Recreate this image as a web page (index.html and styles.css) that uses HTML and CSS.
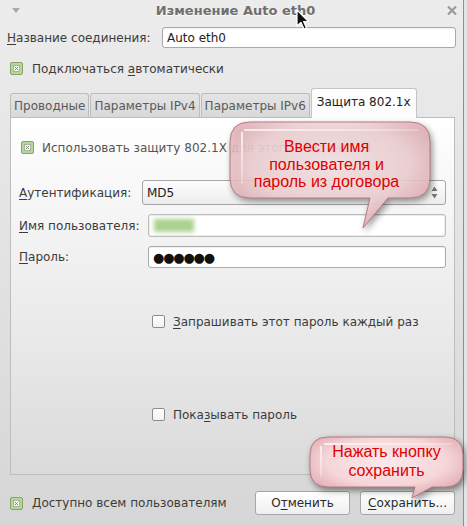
FILE: index.html
```html
<!DOCTYPE html>
<html lang="ru">
<head>
<meta charset="utf-8">
<title>Изменение Auto eth0</title>
<link rel="stylesheet" href="styles.css">
</head>
<body>
<div class="win">
  <div class="titlebar">
    <svg class="tb-menu" width="8" height="5" viewBox="0 0 8 5"><path d="M0 0 H8 L4 5 Z" fill="#a9a9a9"/></svg>
    <span class="tb-title">Изменение Auto eth0</span>
    <svg class="tb-close" width="10" height="9" viewBox="0 0 10 9"><path d="M1 0.5 L9 8.5 M9 0.5 L1 8.5" stroke="#9c9c9c" stroke-width="2.2"/></svg>
  </div>
  <div class="content">
    <div class="name-row">
      <span class="lbl"><u>Н</u>азвание соединения:</span>
      <div class="entry name-entry">Auto eth0</div>
    </div>
    <div class="check-row auto-row">
      <svg class="cb" width="13" height="13" viewBox="0 0 13 13"><rect x="0.5" y="0.5" width="12" height="12" rx="1.5" fill="#b3d795" stroke="#86a470"/><rect x="3.5" y="3.5" width="6" height="6" fill="#fff" stroke="#9aa892" stroke-width="0.8"/><path d="M4.8 4.8 L8.2 8.2 M8.2 4.8 L4.8 8.2" stroke="#7d7d7d" stroke-width="1"/></svg>
      <span>Подключаться <u>а</u>втоматически</span>
    </div>
    <div class="notebook">
      <div class="tabs">
        <div class="tab">Проводные</div>
        <div class="tab">Параметры IPv4</div>
        <div class="tab">Параметры IPv6</div>
        <div class="tab active">Защита 802.1x</div>
      </div>
      <div class="panel">
        <div class="check-row use-row">
          <svg class="cb" width="13" height="13" viewBox="0 0 13 13"><rect x="0.5" y="0.5" width="12" height="12" rx="1.5" fill="#b3d795" stroke="#86a470"/><rect x="3.5" y="3.5" width="6" height="6" fill="#fff" stroke="#9aa892" stroke-width="0.8"/><path d="M4.8 4.8 L8.2 8.2 M8.2 4.8 L4.8 8.2" stroke="#7d7d7d" stroke-width="1"/></svg>
          <span class="use-text">Использовать защиту 802.1X для этого соединения</span>
        </div>
        <div class="form">
          <span class="lbl"><u>А</u>утентификация:</span>
          <div class="combo"><span>MD5</span>
            <svg class="arrows" width="7" height="13" viewBox="0 0 7 13"><path d="M3.5 0.5 L6.5 5 H0.5 Z M3.5 12.5 L6.5 8 H0.5 Z" fill="#777"/></svg>
          </div>
          <span class="lbl"><u>И</u>мя пользователя:</span>
          <div class="entry user-entry"><span class="blob"></span></div>
          <span class="lbl"><u>П</u>ароль:</span>
          <div class="entry pass-entry"><span class="dots">●●●●●●</span></div>
        </div>
        <div class="check-row ask-row">
          <span class="cb-off"></span>
          <span><u>З</u>апрашивать этот пароль каждый раз</span>
        </div>
        <div class="check-row show-row">
          <span class="cb-off"></span>
          <span>Пока<u>з</u>ывать пароль</span>
        </div>
      </div>
    </div>
    <div class="bottom">
      <div class="check-row all-row">
        <svg class="cb" width="13" height="13" viewBox="0 0 13 13"><rect x="0.5" y="0.5" width="12" height="12" rx="1.5" fill="#b3d795" stroke="#86a470"/><rect x="3.5" y="3.5" width="6" height="6" fill="#fff" stroke="#9aa892" stroke-width="0.8"/><path d="M4.8 4.8 L8.2 8.2 M8.2 4.8 L4.8 8.2" stroke="#7d7d7d" stroke-width="1"/></svg>
        <span>Доступно всем пользователям</span>
      </div>
      <div class="buttons">
        <div class="btn">О<u>т</u>менить</div>
        <div class="btn"><u>С</u>охранить...</div>
      </div>
    </div>
  </div>
</div>

<div class="bubble b1">
  <svg class="bubble-shape" width="220" height="124" viewBox="0 0 220 124">
    <defs>
      <radialGradient id="g1" cx="50%" cy="40%" r="65%">
        <stop offset="0" stop-color="#fbe9eb"/>
        <stop offset="0.6" stop-color="#f5d6d9"/>
        <stop offset="1" stop-color="#dfa5ad"/>
      </radialGradient>
      <linearGradient id="h1" x1="0" y1="0" x2="1" y2="1">
        <stop offset="0" stop-color="#fff" stop-opacity="0.95"/>
        <stop offset="0.5" stop-color="#fff" stop-opacity="0.3"/>
        <stop offset="1" stop-color="#fff" stop-opacity="0"/>
      </linearGradient>
    </defs>
    <path d="M28 8 H188 Q208 8 208 28 V64 Q208 84 188 84 H166 L141 114 L148 84 H28 Q8 84 8 64 V28 Q8 8 28 8 Z" fill="url(#g1)" fill-opacity="0.88" stroke="#b07c83" stroke-width="1"/>
    <path d="M22 16 H196 M20 18 V70" stroke="url(#h1)" stroke-width="1.6" fill="none"/>
  </svg>
  <div class="bubble-text t1">Ввести имя<br>пользователя и<br>пароль из договора</div>
</div>

<div class="bubble b2">
  <svg class="bubble-shape" width="165" height="74" viewBox="0 0 165 74">
    <defs>
      <radialGradient id="g2" cx="50%" cy="40%" r="65%">
        <stop offset="0" stop-color="#fbe9eb"/>
        <stop offset="0.6" stop-color="#f5d6d9"/>
        <stop offset="1" stop-color="#dfa5ad"/>
      </radialGradient>
      <linearGradient id="h2" x1="0" y1="0" x2="1" y2="1">
        <stop offset="0" stop-color="#fff" stop-opacity="0.95"/>
        <stop offset="0.5" stop-color="#fff" stop-opacity="0.3"/>
        <stop offset="1" stop-color="#fff" stop-opacity="0"/>
      </linearGradient>
    </defs>
    <path d="M26 8 H143 Q161 8 161 26 V40 Q161 58 143 58 H130 L110 69 L113 58 H26 Q8 58 8 40 V26 Q8 8 26 8 Z" fill="url(#g2)" stroke="#b07c83" stroke-width="1"/>
    <path d="M22 15 H150 M19 17 V48" stroke="url(#h2)" stroke-width="1.6" fill="none"/>
  </svg>
  <div class="bubble-text t2">Нажать кнопку<br>сохранить</div>
</div>

<svg class="cursor" width="14" height="21" viewBox="0 0 14 21"><path d="M1 1 V17 L5 13.5 L8 20 L10.5 19 L7.6 12.5 H12.5 Z" fill="#111" stroke="#fff" stroke-width="1.2" stroke-linejoin="round"/></svg>
</body>
</html>
```

FILE: styles.css
```css
html, body {
  margin: 0;
  padding: 0;
}
body {
  width: 467px;
  height: 526px;
  overflow: hidden;
  position: relative;
  background: #e4e4e4;
  font-family: "DejaVu Sans", "Noto Sans", sans-serif;
  font-size: 12px;
  color: #3c3c3c;
}
u {
  text-decoration: underline;
  text-underline-offset: 2px;
}
.win {
  width: 463px;
  height: 526px;
  border-right: 1px solid #8f8f8f;
  background: linear-gradient(#ececec, #e2e2e2 50%, #d6d6d6);
  display: flex;
  flex-direction: column;
}
.titlebar {
  height: 22px;
  display: flex;
  align-items: center;
  justify-content: space-between;
  padding: 0 6px 0 12px;
  flex: none;
}
.tb-menu {
  margin-top: -2px;
}
.tb-title {
  font-weight: bold;
  font-size: 13px;
  color: #6f6f6f;
  text-shadow: 0 1px 0 #fafafa;
  margin-left: 4px;
  margin-top: -1px;
}
.tb-close {
  margin-top: -2px;
}
.content {
  padding: 0 7px;
  display: flex;
  flex-direction: column;
}
.name-row {
  margin-top: 5px;
  display: flex;
  align-items: center;
  height: 21px;
}
.name-row .lbl {
  width: 155px;
  flex: none;
}
.entry {
  background: #fff;
  border: 1px solid #a9a9a9;
  border-radius: 3px;
  box-sizing: border-box;
  box-shadow: inset 0 1px 1px rgba(0,0,0,0.06);
  display: flex;
  align-items: center;
}
.name-entry {
  flex: 1;
  height: 21px;
  padding-left: 4px;
  color: #222;
}
.check-row {
  display: flex;
  align-items: center;
  height: 13px;
}
.cb {
  flex: none;
  margin-right: 9px;
}
.cb-off {
  flex: none;
  width: 13px;
  height: 13px;
  box-sizing: border-box;
  border: 1px solid #8c8c8c;
  border-radius: 2px;
  background: linear-gradient(#ffffff, #f2f2f2);
  margin-right: 8px;
}
.auto-row {
  margin-top: 14px;
  padding-left: 3px;
}
.notebook {
  margin: 13px 1px 0 3px;
  display: flex;
  flex-direction: column;
}
.tabs {
  display: flex;
  align-items: flex-end;
  height: 30px;
  position: relative;
  z-index: 1;
  margin-bottom: -1px;
}
.tab {
  height: 24px;
  box-sizing: border-box;
  padding: 0 3px;
  border: 1px solid #bcbcbc;
  border-bottom: none;
  border-radius: 3px 3px 0 0;
  background: linear-gradient(#e4e4e4, #d8d8d8);
  color: #5a5a5a;
  display: flex;
  align-items: center;
  margin-right: 1px;
  margin-bottom: 1px;
}
.tab.active {
  height: 30px;
  background: #fdfdfd;
  color: #222;
  border-color: #c4c4c4;
  padding: 0 5px 4px 5px;
  margin-bottom: 0;
}
.panel {
  height: 358px;
  box-sizing: border-box;
  border: 1px solid #bdbdbd;
  background: linear-gradient(#ffffff, #f4f4f4 30%, #e6e6e6 70%, #dadada);
  padding: 0 8px 0 7px;
  display: flex;
  flex-direction: column;
}
.use-row {
  margin-top: 23px;
  padding-left: 3px;
}
.use-row .cb {
  margin-right: 8px;
}
.use-text {
  color: #555;
}
.form {
  margin-top: 26px;
  display: grid;
  grid-template-columns: 124px 1fr;
  grid-template-rows: 25px 23px 22px;
  row-gap: 9px;
  align-items: center;
}
.form .lbl {
  padding-left: 1px;
}
.combo {
  height: 25px;
  box-sizing: border-box;
  border: 1px solid #a5a5a5;
  border-radius: 3px;
  background: linear-gradient(#fdfdfd, #ececec);
  display: flex;
  align-items: center;
  justify-content: space-between;
  padding: 0 7px 0 4px;
  color: #222;
}
.user-entry, .pass-entry {
  margin-left: 6px;
  height: 100%;
  padding-left: 4px;
}
.user-entry {
  border: 1px solid #bdbdbd;
  box-shadow: inset 0 0 0 1px #ececec;
}
.blob {
  display: inline-block;
  width: 40px;
  height: 13px;
  background: #acd28f;
  filter: blur(2px);
  margin-left: 1px;
}
.dots {
  font-size: 13px;
  color: #111;
  letter-spacing: -1.2px;
}
.ask-row {
  margin-top: 47px;
  padding-left: 134px;
}
.show-row {
  margin-top: 80px;
  padding-left: 134px;
}
.bottom {
  margin-top: 16px;
  display: flex;
  align-items: center;
  justify-content: space-between;
  padding: 0 1px 0 3px;
}
.all-row .cb {
  margin-right: 9px;
}
.buttons {
  display: flex;
  gap: 10px;
}
.btn {
  width: 95px;
  height: 24px;
  box-sizing: border-box;
  border: 1px solid #a6a6a6;
  border-radius: 3px;
  background: linear-gradient(#ffffff, #efefef);
  display: flex;
  align-items: center;
  justify-content: center;
  color: #2a2a2a;
}
.bubble {
  position: absolute;
}
.bubble-shape {
  display: block;
  filter: drop-shadow(2px 3px 3px rgba(0,0,0,0.45));
}
.bubble-text {
  position: absolute;
  font-family: "Liberation Sans", Arial, sans-serif;
  font-size: 16px;
  color: #e00000;
  text-align: center;
}
.b1 {
  left: 222px;
  top: 114px;
}
.t1 {
  left: 8px;
  top: 24px;
  width: 193px;
  line-height: 17.5px;
}
.b2 {
  left: 302px;
  top: 429px;
}
.t2 {
  left: 8px;
  top: 13px;
  width: 153px;
  line-height: 19px;
}
.cursor {
  position: absolute;
  left: 296px;
  top: 9px;
}
```
